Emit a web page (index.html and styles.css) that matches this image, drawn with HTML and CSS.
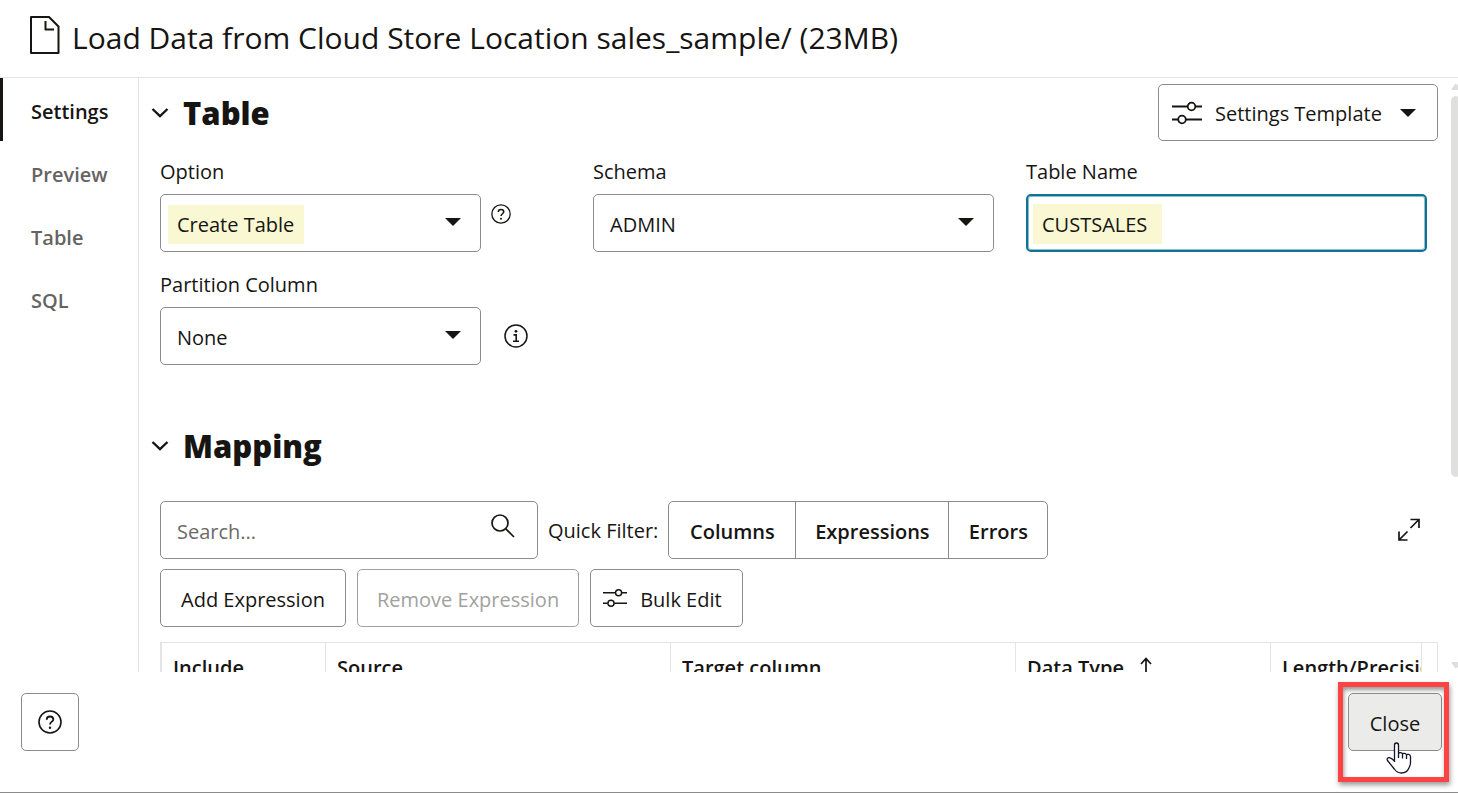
FILE: index.html
```html
<!DOCTYPE html>
<html lang="en">
<head>
<meta charset="utf-8">
<meta name="viewport" content="width=device-width, initial-scale=1">
<title>Load Data from Cloud Store Location</title>
<link rel="stylesheet" href="styles.css">
</head>
<body>
<svg class="defs" aria-hidden="true">
  <symbol id="chevron" viewBox="0 0 18 12"><path d="M1.500 2 9 9.200 16.500 2" fill="none" stroke="currentColor" stroke-width="2.400"/></symbol>
  <symbol id="caret" viewBox="0 0 16 8"><path d="M0 0h16L8 8z" fill="currentColor"/></symbol>
  <symbol id="sliders" viewBox="0 0 30 24"><g fill="none" stroke="currentColor" stroke-width="1.800"><path d="M0 5.500h15.500M23.500 5.500H30M0 18.500h6M14 18.500h16"/><circle cx="19.500" cy="5.500" r="3.800"/><circle cx="10" cy="18.500" r="3.800"/></g></symbol>
  <symbol id="help" viewBox="0 0 24 24"><circle cx="12" cy="12" r="11" fill="none" stroke="currentColor" stroke-width="1.600"/><path d="M8.700 9.700c0-2 1.400-3.200 3.300-3.200s3.300 1.200 3.300 2.900c0 2.200-3.300 2.400-3.300 5.100" fill="none" stroke="currentColor" stroke-width="1.800"/><circle cx="12" cy="17.700" r="1.200" fill="currentColor"/></symbol>
  <symbol id="info" viewBox="0 0 24 24"><circle cx="12" cy="12" r="11" fill="none" stroke="currentColor" stroke-width="1.500"/><circle cx="12" cy="7.300" r="1.400" fill="currentColor"/><path d="M9.500 10.900h2.700v6.200M9 17.200h6" fill="none" stroke="currentColor" stroke-width="1.600"/></symbol>
</svg>

<header class="dialog-header">
  <svg class="file-icon" viewBox="0 0 30 38" aria-hidden="true"><g fill="none" stroke="currentColor" stroke-width="2" stroke-linejoin="round"><path d="M1 1h18l9.500 9.500V37H1z"/><path d="M15.500 5v8.500H24"/></g></svg>
  <h1>Load Data from Cloud Store Location sales_sample/ (23MB)</h1>
</header>

<div class="dialog-body">
  <nav class="side-nav" aria-label="Sections">
    <a class="active" href="#settings" aria-current="page">Settings</a>
    <a href="#preview">Preview</a>
    <a href="#table">Table</a>
    <a href="#sql">SQL</a>
  </nav>

  <main class="content" id="settings">
    <div class="section-head">
      <svg class="chevron"><use href="#chevron"/></svg>
      <h2>Table</h2>
      <button type="button" class="btn template"><svg class="sliders-lg"><use href="#sliders"/></svg><span>Settings Template</span><svg class="caret"><use href="#caret"/></svg></button>
    </div>

    <form class="fields">
      <div class="field">
        <label for="option">Option</label>
        <div class="control-row">
          <div class="select-wrap"><select id="option" class="control marked wide-mark"><option>Create Table</option></select><svg class="caret"><use href="#caret"/></svg></div>
          <svg class="hint-help" role="img" aria-label="Help"><use href="#help"/></svg>
        </div>
      </div>
      <div class="field">
        <label for="schema">Schema</label>
        <div class="select-wrap"><select id="schema" class="control"><option>ADMIN</option></select><svg class="caret"><use href="#caret"/></svg></div>
      </div>
      <div class="field">
        <label for="table-name">Table Name</label>
        <input id="table-name" class="control focused marked" type="text" value="CUSTSALES">
      </div>
      <div class="field">
        <label for="partition">Partition Column</label>
        <div class="control-row">
          <div class="select-wrap"><select id="partition" class="control"><option>None</option></select><svg class="caret"><use href="#caret"/></svg></div>
          <svg class="hint-info" role="img" aria-label="Information"><use href="#info"/></svg>
        </div>
      </div>
    </form>

    <div class="section-head mapping-head">
      <svg class="chevron"><use href="#chevron"/></svg>
      <h2>Mapping</h2>
    </div>

    <div class="mapping">
      <div class="toolbar">
        <div class="search">
          <input class="control" type="search" placeholder="Search..." aria-label="Search">
          <svg class="search-icon" viewBox="0 0 24 24" aria-hidden="true"><g fill="none" stroke="currentColor" stroke-width="1.700"><circle cx="9" cy="9" r="8"/><path d="M14.800 14.800 23 23"/></g></svg>
        </div>
        <span class="filter-label" id="filter-label">Quick Filter:</span>
        <div class="segmented" role="group" aria-labelledby="filter-label">
          <button type="button">Columns</button><button type="button">Expressions</button><button type="button">Errors</button>
        </div>
        <button type="button" class="expand" aria-label="Expand"><svg viewBox="0 0 24 24"><path d="M13.500 1.500h8.500V10M13.500 10 22 1.500M10.500 22H2v-8.500M10.500 13.500 2 22" fill="none" stroke="currentColor" stroke-width="1.700"/></svg></button>
      </div>
      <div class="toolbar actions">
        <button type="button" class="btn add"><span>Add Expression</span></button>
        <button type="button" class="btn" disabled><span>Remove Expression</span></button>
        <button type="button" class="btn bulk"><svg class="sliders-sm"><use href="#sliders"/></svg><span>Bulk Edit</span></button>
      </div>
      <table class="grid">
        <colgroup><col class="c-include"><col class="c-name"><col class="c-name"><col class="c-type"><col><col class="c-end"></colgroup>
        <thead><tr>
          <th scope="col">Include</th><th scope="col">Source</th><th scope="col">Target column</th>
          <th scope="col">Data Type<svg class="sort" viewBox="0 0 12 18" aria-hidden="true"><path d="M6 18V2M1 7l5-5.500L11 7" fill="none" stroke="currentColor" stroke-width="1.700"/></svg></th>
          <th scope="col">Length/Precision</th><td></td>
        </tr></thead>
      </table>
    </div>
  </main>

  <div class="scrollbar" aria-hidden="true">
    <svg viewBox="0 0 10 6"><path d="M0 6 4 0h2l4 6z"/></svg>
    <div class="track"><div class="thumb"></div></div>
    <svg viewBox="0 0 10 6"><path d="M0 0h10L6 6H4z"/></svg>
  </div>
</div>

<footer class="dialog-footer">
  <button type="button" class="btn help-btn" aria-label="Help"><svg><use href="#help"/></svg></button>
  <div class="callout">
    <button type="button" class="btn close"><span>Close</span></button>
    <svg class="pointer" viewBox="0 0 26 32" aria-hidden="true"><path d="M8.500 20V3.200C8.500 1.700 9.300 1 10.500 1s2 .8 2 2.200v8.300c.3-1.200 3.700-1.400 4 .6.500-1.300 3.700-1 4 .8.600-1 3.900-.7 4 1.600v6.500c0 2.500-1 3.800-1.800 5.500-1.300 3-3.500 4.500-7.200 4.500-3.500 0-5.500-1.500-7.200-4L1.500 18.500c-1-1.500.2-3.200 2-2.900 1.200.2 2.500 1 5 3.400M12.500 11.500V16M16.500 12v4.500M20.500 13v4" fill="#fff" stroke="#14142b" stroke-width="1.300" stroke-linejoin="round"/></svg>
  </div>
</footer>
</body>
</html>
```

FILE: styles.css
```css
* { box-sizing: border-box; }

body {
  margin: 0;
  height: 100vh;
  display: flex;
  flex-direction: column;
  border-bottom: 1px solid #8b8b8b;
  background: #fff;
  color: #161513;
  font: 20px/30px "Open Sans", "Noto Sans", sans-serif;
}

button, input, select { font: inherit; color: inherit; }
svg { display: block; flex: none; }
.defs { position: absolute; width: 0; height: 0; }

.dialog-header {
  display: flex;
  align-items: flex-start;
  gap: 12px;
  padding: 16px 30px 17px;
  border-bottom: 1px solid #e4e4e3;
}
.file-icon { width: 30px; height: 38px; }
h1 { margin: 0; font-size: 30px; line-height: 44px; font-weight: 400; }

.dialog-body { flex: 1; min-height: 0; display: flex; overflow: hidden; }

.side-nav { flex: none; width: 139px; border-right: 1px solid #e4e4e3; }
.side-nav a {
  display: block;
  padding: 19px 0 14px 28px;
  border-left: 3px solid transparent;
  color: #656462;
  font-weight: 600;
  text-decoration: none;
}
.side-nav a.active { color: #161513; border-color: #161513; }

.content { flex: 1; min-width: 0; padding: 6px 13px 0 12px; }

.section-head { display: flex; align-items: center; min-height: 57px; gap: 14px; }
.chevron { width: 18px; height: 12px; }
h2 { margin: 0; flex: 1; font-size: 31px; line-height: 40px; font-weight: 800; }
.mapping-head { margin-top: 52px; }

.btn {
  display: flex;
  align-items: center;
  justify-content: center;
  height: 58px;
  padding: 0 19px;
  border: 1px solid #8b8b8a;
  border-radius: 5px;
  background: #fff;
  white-space: nowrap;
}
.btn span { padding-top: 3px; }
.btn:disabled { color: #a2a1a0; border-color: #a2a1a0; }
.template { height: 57px; width: 280px; padding: 0 21px 0 13px; gap: 13px; justify-content: flex-start; }
.template .caret { margin-left: auto; }
.sliders-lg { width: 30px; height: 24px; }
.sliders-sm { width: 24px; height: 20px; }
.caret { width: 16px; height: 8px; }

.fields {
  display: grid;
  grid-template-columns: repeat(3, 1fr);
  gap: 18px 32px;
  padding: 16px 11px 0 9px;
}
.field { display: flex; flex-direction: column; gap: 7px; }
.control-row { display: flex; }
.select-wrap { position: relative; flex: 1; }
.select-wrap .caret { position: absolute; right: 20px; top: 24px; pointer-events: none; }
.control {
  display: block;
  width: 100%;
  height: 58px;
  padding: 3px 16px 0;
  border: 1px solid #8b8b8a;
  border-radius: 5px;
  background-color: #fff;
  appearance: none;
  outline: none;
}
.control.focused { border: 2px solid #0f7396; padding: 2px 14px 0; box-shadow: inset 0 0 0 1px #8fbfcf; }
.marked {
  background-image: linear-gradient(#faf8d2, #faf8d2);
  background-repeat: no-repeat;
  background-position: 5px 8px;
  background-size: 129px 40px;
}
.wide-mark { background-position: 7px 10px; background-size: 136px 39px; }
.hint-help { width: 20px; height: 20px; margin: 10px 50px 0 10px; }
.hint-info { width: 24px; height: 24px; margin: 17px 33px 0 23px; }

.mapping { padding: 27px 0 0 9px; }
.toolbar { display: flex; align-items: center; gap: 10px; }
.actions { gap: 11px; padding: 10px 0 15px; }
.search { position: relative; width: 378px; }
.search .control::placeholder { color: #6b6a68; opacity: 1; }
.search-icon { position: absolute; right: 23px; top: 13px; width: 24px; height: 24px; }
.filter-label { padding-top: 2px; white-space: nowrap; }
.segmented {
  display: grid;
  grid-template-columns: 126fr 153fr 99fr;
  width: 380px;
  border: 1px solid #8b8b8a;
  border-radius: 5px;
}
.segmented button {
  height: 56px;
  padding: 3px 0 0;
  border: 0;
  border-left: 1px solid #8b8b8a;
  background: none;
  font-weight: 600;
}
.segmented button:first-child { border-left: 0; }
.expand { margin-left: auto; margin-right: 17px; padding: 0; border: 0; background: none; }
.expand svg { width: 24px; height: 24px; }
.add { min-width: 186px; }
.bulk { gap: 13px; padding: 0 20px 0 12px; }

.grid { width: 100%; table-layout: fixed; border-collapse: separate; border-spacing: 0; border: 1px solid #e4e4e3; }
.grid th {
  height: 50px;
  padding: 0 0 0 11px;
  overflow: hidden;
  border-left: 1px solid #e4e4e3;
  font-weight: 600;
  text-align: left;
  white-space: nowrap;
}
.grid td { padding: 0; border-left: 1px solid #e4e4e3; }
.c-include { width: 164px; }
.c-name { width: 345px; }
.c-type { width: 255px; }
.c-end { width: 16px; }
.sort { display: inline-block; width: 12px; height: 18px; margin-left: 16px; }

.scrollbar { flex: none; width: 7px; padding: 6px 0 4px; display: flex; flex-direction: column; overflow: hidden; }
.scrollbar svg { width: 10px; height: 6px; fill: #dededd; }
.track { flex: 1; padding: 6px 0; }
.thumb { width: 10px; height: 68%; border-radius: 5px; background: #e0e0df; }

.dialog-footer {
  display: flex;
  justify-content: space-between;
  padding: 21px 16px 41px 21px;
}
.help-btn { width: 58px; padding: 0; }
.help-btn svg { width: 24px; height: 24px; }
.callout { position: relative; }
.callout::after {
  content: "";
  position: absolute;
  inset: -11px -7px -31px -10px;
  border: 5px solid #ff4343;
  box-shadow: 1px 3px 5px #0006, inset 1px 3px 4px #0006;
  pointer-events: none;
}
.close { background: #ebebea; min-width: 94px; }
.pointer { position: absolute; left: 38px; top: 49px; width: 26px; height: 32px; }
```
